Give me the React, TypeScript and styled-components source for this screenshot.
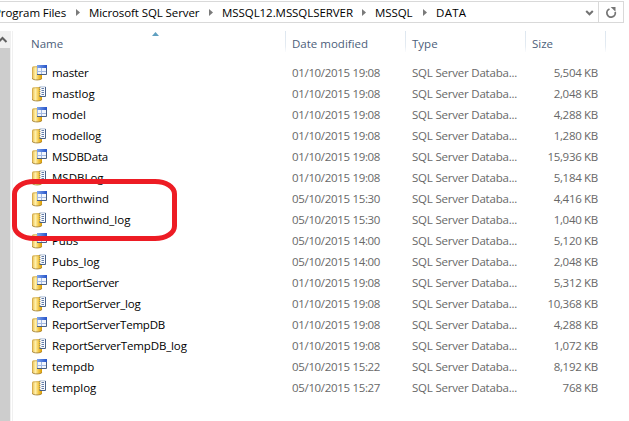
import React from "react";
import styled, { createGlobalStyle } from "styled-components";

const GlobalStyle = createGlobalStyle`
  * { box-sizing: border-box; }
  body { margin: 0; background: #fff; overflow: hidden; }
`;

const Window = styled.div`
  position: relative;
  width: 629px;
  height: 421px;
  overflow: hidden;
  display: flex;
  flex-direction: column;
  background: #fff;
  color: #000;
  font: 11.5px/21px "Open Sans", "Noto Sans", sans-serif;
  white-space: nowrap;
`;

const AddressBar = styled.div`
  display: flex;
  flex: none;
  width: 624px;
  height: 22px;
  margin-top: 1px;
  border: 1px solid #d9d9d9;
  border-left: 0;
`;

const Crumbs = styled.div`
  display: flex;
  flex: 1;
  min-width: 0;
  line-height: 21px;
`;

const Crumb = styled.div<{ $width: number }>`
  flex: none;
  display: flex;
  width: ${(p) => p.$width}px;
`;

const CrumbText = styled.span<{ $spacing: number; $first?: boolean }>`
  flex: 1;
  padding-left: ${(p) => (p.$first ? 0 : 9)}px;
  margin-left: ${(p) => (p.$first ? -6 : 0)}px;
  letter-spacing: ${(p) => p.$spacing}px;
`;

const CrumbArrow = styled.svg`
  flex: none;
  width: 4px;
  height: 7px;
  margin-top: 7px;
  fill: #7a7a7a;
`;

const BarButton = styled.div<{ $divided?: boolean }>`
  width: ${(p) => (p.$divided ? 25 : 18)}px;
  height: 20px;
  border-left: ${(p) => (p.$divided ? "1px solid #d9d9d9" : "0")};
  svg { display: block; }
`;

const Main = styled.div`
  display: flex;
  flex: 1;
  margin-top: 8px;
`;

const ScrollBar = styled.div`
  width: 11px;
  background: #f0f0f0;
  display: flex;
  flex-direction: column;
  svg { display: block; flex: none; }
`;

const Thumb = styled.div`
  flex: 1;
  width: 10px;
  background: #cdcdcd;
`;

const List = styled.div`
  flex: 1;
  margin-left: 1px;
  border-left: 1px solid #f0f0f0;
`;

const columns = "273px 120px 120px 80px";

const Header = styled.div`
  position: relative;
  display: grid;
  grid-template-columns: ${columns};
  height: 31px;
  color: #4c607a;
`;

const HeaderCell = styled.div<{ $indent: number }>`
  height: 21px;
  padding: 2px 0 0 ${(p) => p.$indent}px;
  border-right: 1px solid;
  border-image: linear-gradient(#dce6ef, #e4ebf2 70%, #fff) 1;
`;

const SortArrow = styled.svg`
  position: absolute;
  left: 139px;
  top: 1px;
`;

const Row = styled.div`
  display: grid;
  grid-template-columns: ${columns};
  height: 21px;
  color: #686868;
`;

const NameCell = styled.div`
  display: flex;
  padding-left: 19px;
  color: #000;
`;

const Fit = styled.span<{ $spacing: number }>`
  letter-spacing: ${(p) => p.$spacing}px;
`;

const Cell = styled.div`
  padding-left: 6px;
`;

const SizeCell = styled.div`
  text-align: right;
  padding-right: 8px;
`;

const FileIcon = styled.svg`
  flex: none;
  width: 16px;
  height: 16px;
  margin: 3px 4px 0 0;
`;

const Highlight = styled.svg`
  position: absolute;
  left: 12px;
  top: 179px;
`;

type FileRow = [name: string, spacing: number, date: string, size: string];

const files: FileRow[] = [
  ["master", -0.2, "01/10/2015 19:08", "5,504 KB"],
  ["mastlog", 0, "01/10/2015 19:08", "2,048 KB"],
  ["model", 0, "01/10/2015 19:08", "4,288 KB"],
  ["modellog", -0.1, "01/10/2015 19:08", "1,280 KB"],
  ["MSDBData", -0.2, "01/10/2015 19:08", "15,936 KB"],
  ["MSDBLog", 0, "01/10/2015 19:08", "5,184 KB"],
  ["Northwind", -0.05, "05/10/2015 15:30", "4,416 KB"],
  ["Northwind_log", 0, "05/10/2015 15:30", "1,040 KB"],
  ["Pubs", -0.1, "05/10/2015 14:00", "5,120 KB"],
  ["Pubs_log", 0, "05/10/2015 14:00", "2,048 KB"],
  ["ReportServer", -0.33, "01/10/2015 19:08", "5,312 KB"],
  ["ReportServer_log", -0.2, "01/10/2015 19:08", "10,368 KB"],
  ["ReportServerTempDB", -0.22, "01/10/2015 19:08", "4,288 KB"],
  ["ReportServerTempDB_log", -0.15, "01/10/2015 19:08", "1,072 KB"],
  ["tempdb", 0, "05/10/2015 15:22", "8,192 KB"],
  ["templog", 0, "05/10/2015 15:27", "768 KB"],
];

function DatabaseIcon({ log }: { log: boolean }) {
  return (
    <FileIcon viewBox="0 0 16 16">
      <path d="M0 2.500C0 1.300 2.500 1 5 1s5 .3 5 1.500v11c0 1.200-2.500 1.700-5 1.700S0 14.700 0 13.500z" fill="url(#gold)" />
      <path d="M.4 13.300c0 1.200 2.200 1.600 4.600 1.600s4.700-.4 4.700-1.600" fill="none" stroke="#9c7c3c" strokeWidth=".8" />
      <path d="M1 2.200C3 1.600 7.500 1.600 9 2.200" fill="none" stroke="#c9a75a" strokeWidth=".8" />
      {log ? (
        <>
          <path d="M8 1h5v9H8z" fill="#f7faff" />
          <path d="M7.500.8h6" stroke="#a3b5d0" strokeWidth=".8" />
          <path d="M13.500 1v9.500H7.500" fill="none" stroke="#4a6287" />
          <path d="M9.500 2.500H12M9.500 4.500H12M9.500 6.500H12M9.500 8.500H12" stroke="#667ea8" />
          <path d="M7 1.500h1.500M7 3.500h1.500M7 5.500h1.500M7 7.500h1.500M7 9.500h1.500" stroke="#8f8560" strokeWidth=".8" />
        </>
      ) : (
        <>
          <path d="M5 3h10v7H5z" fill="#f2f6fd" />
          <path d="M5 0h10v3H5z" fill="url(#blue)" />
          <path d="M5.500 3v6.500M9.500 3v6M6 6.500h8" stroke="#a3b9e3" />
          <path d="M14.500 3v6.500H5" fill="none" stroke="#4a5f83" />
        </>
      )}
    </FileIcon>
  );
}

const crumbs: [text: string, width: number, spacing: number][] = [
  ["Program Files", 80, -0.08],
  ["Microsoft SQL Server", 133, -0.1],
  ["MSSQL12.MSSQLSERVER", 153, -0.06],
  ["MSSQL", 61, -0.1],
];

export default function App() {
  return (
    <Window>
      <GlobalStyle />
      <AddressBar>
        <Crumbs>
          {crumbs.map(([text, width, spacing], i) => (
            <Crumb key={text} $width={width}>
              <CrumbText $spacing={spacing} $first={i === 0}>{text}</CrumbText>
              <CrumbArrow viewBox="0 0 4 7"><path d="M0 0l4 3.500L0 7z" /></CrumbArrow>
            </Crumb>
          ))}
          <CrumbText $spacing={0.3}>DATA</CrumbText>
        </Crumbs>
        <BarButton>
          <svg width="18" height="20"><path d="M6.200 9l3.300 3.300L12.800 9" fill="none" stroke="#727272" strokeWidth="2" /></svg>
        </BarButton>
        <BarButton $divided>
          <svg width="24" height="20">
            <path d="M10.500 7A4.200 4.200 0 1 0 16.200 10" fill="none" stroke="#757575" strokeWidth="1.800" />
            <path d="M11.700 5h4.800v4.800z" fill="#757575" />
          </svg>
        </BarButton>
      </AddressBar>
      <Main>
        <ScrollBar>
          <svg width="11" height="17">
            <defs>
              <linearGradient id="gold" gradientUnits="userSpaceOnUse" x1="0" y1="0" x2="10" y2="0">
                <stop stopColor="#c99a3c" />
                <stop offset=".15" stopColor="#f2d274" />
                <stop offset=".35" stopColor="#fff0aa" />
                <stop offset=".65" stopColor="#f3c748" />
                <stop offset="1" stopColor="#d99a00" />
              </linearGradient>
              <linearGradient id="blue">
                <stop stopColor="#7ea4ee" />
                <stop offset="1" stopColor="#2553c8" />
              </linearGradient>
            </defs>
            <path d="M-1.500 11L2.500 7l4 4" fill="none" stroke="#606060" strokeWidth="2" />
          </svg>
          <Thumb />
        </ScrollBar>
        <List>
          <Header>
            <HeaderCell $indent={18}>Name</HeaderCell>
            <HeaderCell $indent={6}>Date modified</HeaderCell>
            <HeaderCell $indent={6}>Type</HeaderCell>
            <HeaderCell $indent={6}>Size</HeaderCell>
            <SortArrow width="7" height="4"><path d="M0 4l3.500-4L7 4z" fill="#5f9fc0" /></SortArrow>
          </Header>
          {files.map(([name, spacing, date, size]) => (
            <Row key={name}>
              <NameCell>
                <DatabaseIcon log={/log$/i.test(name)} />
                <Fit $spacing={spacing}>{name}</Fit>
              </NameCell>
              <Cell><Fit $spacing={-0.33}>{date}</Fit></Cell>
              <Cell><Fit $spacing={-0.21}>SQL Server Databa...</Fit></Cell>
              <SizeCell><Fit $spacing={-0.3}>{size}</Fit></SizeCell>
            </Row>
          ))}
        </List>
      </Main>
      <Highlight width="166" height="63">
        <path d="M22 2.500H143C154 2.500 162.500 8 162.500 15V47C162.500 54 154 59.500 143 59.500H22C11 59.500 2.500 54 2.500 47V15C2.500 8 11 2.500 22 2.500z" fill="none" stroke="#ed1c24" strokeWidth="5" />
      </Highlight>
    </Window>
  );
}
